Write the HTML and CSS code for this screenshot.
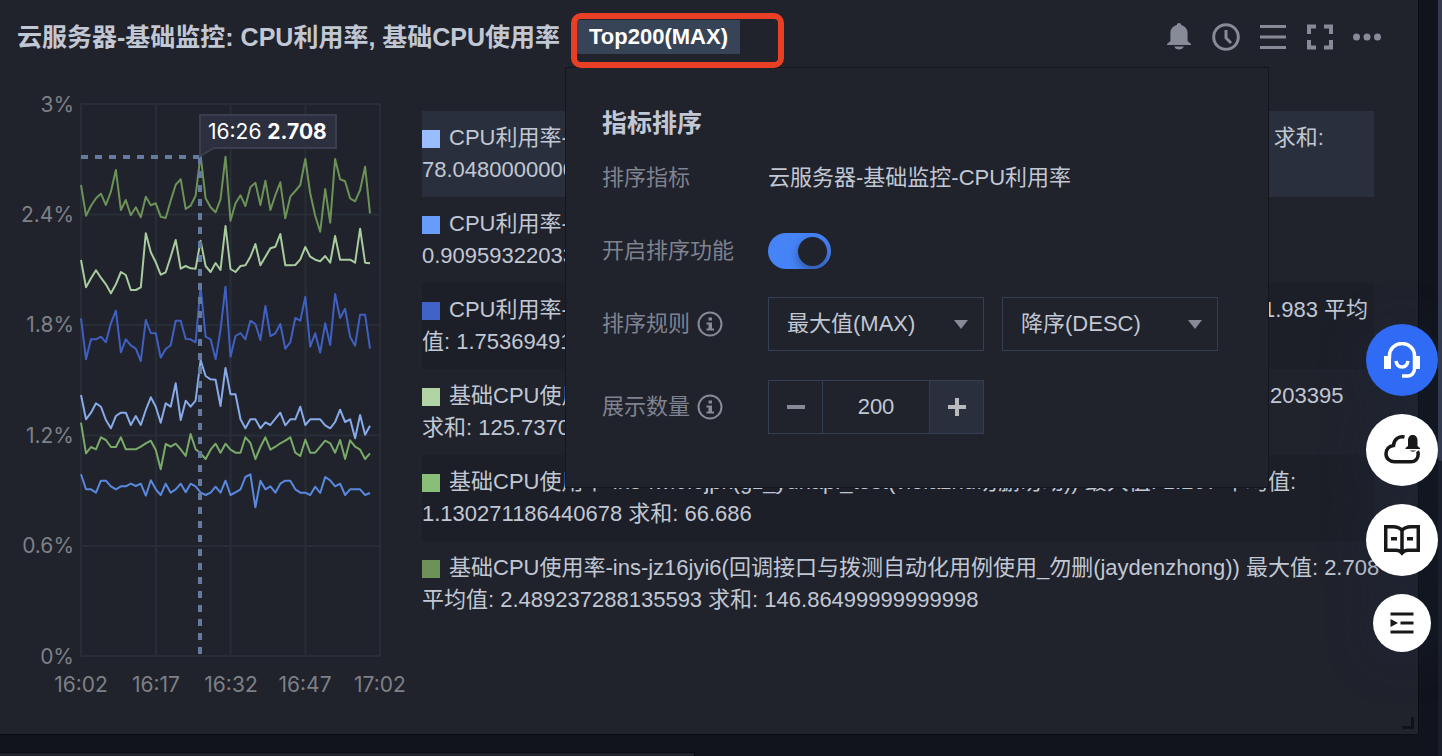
FILE: index.html
```html
<!DOCTYPE html>
<html lang="zh-CN">
<head>
<meta charset="utf-8">
<title>云服务器-基础监控</title>
<link rel="stylesheet" href="styles.css">
</head>
<body>
<main class="board">
  <section class="panel">
    <header class="panel-head">
      <h1 class="panel-title">云服务器-基础监控: CPU利用率, 基础CPU使用率</h1>
      <div class="tag-wrap">
        <button class="tag" type="button">Top200(MAX)</button>
        <span class="highlight"></span>
      </div>
      <nav class="tools">
        <button class="tool" type="button" aria-label="告警"><svg viewBox="0 0 28 28"><path d="M14 0c1.500 0 2.200.8 2.200 2 4 1 6.400 4.200 6.400 8.200V18l3.400 3v1H2v-1l3.400-3v-7.800C5.400 6.200 7.800 3 11.800 2c0-1.200.7-2 2.200-2z" /><path d="M9.200 23.500h9.600c-.8 2-2.400 3-4.800 3s-4-1-4.800-3z"/></svg></button>
        <button class="tool" type="button" aria-label="时间"><svg viewBox="0 0 28 28"><circle cx="14" cy="14" r="12.300" class="line"/><path d="M14 7v8l5 5" class="line"/></svg></button>
        <button class="tool" type="button" aria-label="列表"><svg viewBox="0 0 28 28"><path d="M1 2h26v3H1zM1 12.500h26v3H1zM1 23h26v3H1z"/></svg></button>
        <button class="tool" type="button" aria-label="全屏"><svg viewBox="0 0 28 28"><path d="M3 11V3.500h7M18 3.500h7V11M25 17v7.500h-7M10 24.500H3V17" class="line thick"/></svg></button>
        <button class="tool" type="button" aria-label="更多"><svg viewBox="0 0 28 28"><circle cx="3.500" cy="14" r="3.500"/><circle cx="14" cy="14" r="3.500"/><circle cx="24.500" cy="14" r="3.500"/></svg></button>
      </nav>
    </header>

    <div class="panel-body">
      <svg class="chart" viewBox="0 74 410 640" role="img" aria-label="CPU利用率">
        <path class="grid" d="M81 104H380M81 214.500H380M81 325H380M81 435.500H380M81 546H380M81 656H380M81 104V656M156 104V656M230.500 104V656M305.500 104V656M380 104V656"/>
        <g class="ylabels">
          <text x="74" y="112">3%</text><text x="74" y="222">2.4%</text><text x="74" y="332">1.8%</text>
          <text x="74" y="443">1.2%</text><text x="74" y="553">0.6%</text><text x="74" y="664">0%</text>
        </g>
        <g class="xlabels">
          <text x="81" y="692">16:02</text><text x="156" y="692">16:17</text><text x="231" y="692">16:32</text>
          <text x="305" y="692">16:47</text><text x="380" y="692">17:02</text>
        </g>
        <g id="series"></g>
        <path class="cross" d="M81 157H200"/><path class="cross" d="M200 157V656"/>
        <path class="tip" d="M200 156V115H336V148H214Z"/>
        <text class="tip-text" x="208" y="139">16:26 <tspan class="tip-value">2.708</tspan></text>
      </svg>

      <ul class="legend">
        <li class="item active"><i class="swatch s1"></i>CPU利用率-ins-e1kq7v2o(test_cvmi01)<span class="stat">最大值: 1.606</span><span class="stat">平均值: 1.3228474576271188</span><span class="stat">求和:</span><br>78.04800000000002</li>
        <li class="item"><i class="swatch s2"></i>CPU利用率-ins-f1w6l6jk(gz_yunapi_test(viola勿删))<span class="stat">最大值: 0.987</span><span class="stat">平均值:</span><br>0.9095932203389831<span class="stat">求和: 53.666</span></li>
        <li class="item"><i class="swatch s3"></i>CPU利用率-ins-jz16jyi6(回调接口与拨测自动化用例使用勿删(aydenzhong))<span class="stat">最大值: 1.983</span><span class="stat">平均</span><br>值: 1.7536949152542374<span class="stat">求和: 103.468</span></li>
        <li class="item"><i class="swatch s4"></i>基础CPU使用率-ins-e1kq7v2o(test_cvm00001)<span class="stat">最大值: 2.321</span><span class="stat">平均值: 2.1311355932203395</span><br>求和: 125.73700000000002</li>
        <li class="item"><i class="swatch s5"></i>基础CPU使用率-ins-fwi6l6jpk(gz_yunapi_test(violazhu勿删勿动))<span class="stat">最大值: 1.267</span><span class="stat">平均值:</span><br>1.130271186440678<span class="stat">求和: 66.686</span></li>
        <li class="item"><i class="swatch s6"></i>基础CPU使用率-ins-jz16jyi6(回调接口与拨测自动化用例使用_勿删(jaydenzhong))<span class="stat">最大值: 2.708</span><br>平均值: 2.489237288135593<span class="stat">求和: 146.86499999999998</span></li>
      </ul>
    </div>
    <span class="resize"></span>

    <form class="popover">
      <h2 class="popover-title">指标排序</h2>
      <div class="row"><span class="label">排序指标</span><span class="value">云服务器-基础监控-CPU利用率</span></div>
      <div class="row toggle-row"><label class="label" for="enable">开启排序功能</label><input class="toggle" id="enable" type="checkbox" checked></div>
      <div class="row control-row">
        <label class="label" for="rule">排序规则<svg class="info" viewBox="0 0 26 26"><circle cx="13" cy="13" r="11.500"/><path d="M11.500 6.500h3.500v3h-3.500zM9.500 11.500H15v6h2v2H9.500v-2h2v-4h-2z"/></svg></label>
        <div class="selects">
          <span class="select-wrap"><select class="select" id="rule"><option>最大值(MAX)</option></select><svg class="caret" viewBox="0 0 14 9"><path d="M0 0h14L7 9z"/></svg></span>
          <span class="select-wrap"><select class="select" aria-label="排序方式"><option>降序(DESC)</option></select><svg class="caret" viewBox="0 0 14 9"><path d="M0 0h14L7 9z"/></svg></span>
        </div>
      </div>
      <div class="row control-row">
        <label class="label" for="count">展示数量<svg class="info" viewBox="0 0 26 26"><circle cx="13" cy="13" r="11.500"/><path d="M11.500 6.500h3.500v3h-3.500zM9.500 11.500H15v6h2v2H9.500v-2h2v-4h-2z"/></svg></label>
        <div class="stepper">
          <button class="step" type="button" aria-label="减少"><svg viewBox="0 0 18 18"><path d="M0 7h18v4H0z"/></svg></button>
          <input class="count" id="count" type="text" value="200">
          <button class="step plus" type="button" aria-label="增加"><svg viewBox="0 0 18 18"><path d="M0 7h7V0h4v7h7v4h-7v7H7v-7H0z"/></svg></button>
        </div>
      </div>
    </form>
  </section>
  <section class="panel next-panel"></section>
</main>
<div class="scroll-thumb"></div>

<aside class="dock">
  <button class="fab primary" type="button" aria-label="客服"><svg viewBox="0 0 36 36"><path d="M5.500 16v-2.500a12.500 12 0 0 1 25 0V27a7 7 0 0 1-7 7H18" class="ln"/><path d="M0 14h7v13H0zM29 14h7v13h-7z" class="fl"/><path d="M12 19c1.500 8 10.500 8 12 0" class="ln"/></svg></button>
  <button class="fab" type="button" aria-label="云告警"><svg viewBox="0 0 36 36"><path d="M20.500 5c-5.500-1-10.500 2-11 8.500C5 14 2 17.500 2 21.800c0 4.700 3.700 8 8.500 8H27c4 0 7.200-3.200 7.200-7.500 0-1.200-.2-2.200-.7-3" class="ln"/><path d="M24 8.500C24 5 26 3 28.700 3s4.800 2 4.800 5.500V14l2.500 2v1H21.500v-1l2.500-2zM26 18.500h6c-.8 1.500-5.200 1.500-6 0z" class="fl"/></svg></button>
  <button class="fab" type="button" aria-label="文档"><svg viewBox="0 0 36 36"><path d="M18 8.500C15.500 5 12 4.700 9 4.700H1.700v23.600H12c3 0 4 .4 6 2.700 2-2.300 3-2.700 6-2.700h10.300V4.700H27c-3 0-6.500.3-9 3.800V30" class="ln"/><path d="M7 15h6v3.500H7zM23 15h6v3.500h-6z" class="fl"/></svg></button>
  <button class="fab small" type="button" aria-label="展开"><svg viewBox="0 0 24 24"><path d="M.5 1.500h23v3H.500zM.5 19.500h23v3H.500zM10.500 10.500h13v3h-13zM.5 8l7.500 4L.5 16z" class="fl"/></svg></button>
</aside>
<script src="chart.js"></script>
</body>
</html>
```
FILE: styles.css
```css
* { box-sizing: border-box; }

body {
  margin: 0;
  height: 100vh;
  overflow: hidden;
  background: #11141c;
  color: #c1c8d4;
  font: 22px/32px "Liberation Sans", "Noto Sans CJK SC", sans-serif;
}

button, input, select { font: inherit; color: inherit; margin: 0; padding: 0; border: 0; background: none; border-radius: 0; }

.board {
  height: 100%;
  display: flex;
  flex-direction: column;
  gap: 17px;
  padding-right: 19px;
  border-right: 4px solid #1a1e2a;
}

.scroll-thumb { position: fixed; right: 0; top: 0; width: 4px; height: 61%; background: #343b4f; border-radius: 0 0 0 4px; }

.panel {
  position: relative;
  flex: 1;
  background: #20222c;
  border: solid #0b0d12;
  border-width: 0 1px 1px 0;
}

.next-panel { flex: 0 0 4px; width: 49%; border-width: 1px 1px 0 0; }

.panel-head { display: flex; align-items: center; height: 74px; padding: 0 37px 0 17px; }
.panel-title { margin: 0; font-size: 25px; line-height: 34px; font-weight: bold; white-space: nowrap; }
.tag-wrap { position: relative; margin-left: 17px; }
.tag { display: block; height: 34px; padding: 0 12px; background: #374357; color: #fff; font-size: 22px; font-weight: bold; }
.highlight { position: absolute; left: -6px; top: -7px; width: 213px; height: 55px; border: 6px solid #e83f25; border-radius: 10px; z-index: 3; }

.tools { display: flex; gap: 19px; margin-left: auto; }
.tool { width: 28px; height: 28px; }
.tool svg { display: block; fill: #878b97; }
.tool .line { fill: none; stroke: #878b97; stroke-width: 3; }
.tool .thick { stroke-width: 4; }

.panel-body { display: flex; gap: 12px; padding-right: 44px; }
.chart { flex: none; width: 410px; height: 640px; font-family: Inter, sans-serif; font-size: 21px; }
.grid { stroke: #282e37; stroke-width: 2; fill: none; }
.ylabels, .xlabels { fill: #7e8086; }
.ylabels { text-anchor: end; }
.xlabels { text-anchor: middle; }
.series { fill: none; stroke-width: 2; stroke-linejoin: round; }
.cross { stroke: #647a9f; stroke-width: 4; stroke-dasharray: 7 7; fill: none; }
.tip { fill: #2d303e; stroke: #3a3e4e; stroke-width: 2; fill-opacity: 0.95; }
.tip-text { fill: #fff; }
.tip-value { font-weight: bold; }

.legend { flex: 1; min-width: 0; margin: 37px 0 0; padding: 0; list-style: none; }
.item { padding: 11px 0; white-space: nowrap; }
.item:nth-child(odd) { background: #1d1f28; }
.item.active { background: #292f3c; }
.stat { margin-left: 6px; }
.swatch { display: inline-block; width: 18px; height: 18px; margin-right: 9px; vertical-align: -3px; }
.s1 { background: #99bdff; }
.s2 { background: #669dfa; }
.s3 { background: #4163c8; }
.s4 { background: #b1d4a5; }
.s5 { background: #89be78; }
.s6 { background: #6c9258; }

.resize { position: absolute; right: 4px; bottom: 5px; width: 12px; height: 12px; border: solid #101218; border-width: 0 3px 3px 0; }

.popover {
  position: absolute;
  left: 565px;
  top: 67px;
  padding: 37px 50px 53px 36px;
  background: #20222c;
  border: 1px solid #14161d;
  z-index: 2;
}
.popover-title { margin: 0 0 19px; font-size: 25px; line-height: 36px; }
.row { display: flex; align-items: center; min-height: 36px; }
.toggle-row { margin: 37px 0 28px; }
.control-row + .control-row { margin-top: 29px; }
.label { display: flex; align-items: center; width: 166px; color: #7f8390; }
.info { width: 26px; height: 26px; margin-left: 7px; fill: #878b97; }
.info circle { fill: none; stroke: #878b97; stroke-width: 2; }

.toggle { appearance: none; display: flex; justify-content: flex-end; align-items: center; width: 63px; height: 36px; padding: 0 4px; border-radius: 18px; background: #4583f7; overflow: hidden; }
.toggle::after { content: ""; width: 29px; height: 29px; border-radius: 50%; background: #20222c; box-shadow: 0 4px 8px rgba(30, 40, 70, 0.5); }

.selects { display: flex; gap: 18px; }
.select-wrap { display: flex; position: relative; }
.select { appearance: none; width: 216px; height: 54px; padding: 0 18px; border: 1px solid #343f53; }
.caret { position: absolute; right: 16px; top: 23px; width: 14px; height: 9px; fill: #878b97; pointer-events: none; }

.stepper { display: flex; width: 216px; height: 54px; border: 1px solid #343f53; }
.step { display: grid; place-items: center; flex: none; width: 53px; fill: #878b97; }
.step svg { width: 18px; height: 18px; }
.plus { background: #292f3c; fill: #b8babd; }
.count { flex: 1; min-width: 0; text-align: center; border: solid #343f53; border-width: 0 1px; }

.dock { position: fixed; right: 4px; top: 324px; display: flex; flex-direction: column; align-items: center; gap: 18px; z-index: 4; filter: drop-shadow(0 6px 24px rgba(25, 45, 75, 0.3)); }
.fab { display: grid; place-items: center; width: 72px; height: 72px; border-radius: 50%; background: #fff; color: #17181a; }
.fab svg { width: 36px; height: 36px; }
.fab .ln { fill: none; stroke: currentColor; stroke-width: 3.5; }
.fab .fl { fill: currentColor; }
.fab.primary { background: #2f6bf5; color: #fff; }
.fab.small { width: 58px; height: 58px; }
.fab.small svg { width: 24px; height: 24px; }
```
FILE: chart.js
```js
// One sample per minute from 16:02; values are thirds of a pixel below the given base line.
const series = [
  { color: '#6c9258', base: 90, data: [285,377,347,325,311,345,305,240,360,330,376,352,382,320,346,340,380,384,332,284,268,357,347,317,195,325,352,367,328,200,392,340,316,348,292,278,345,272,360,315,277,385,320,303,285,207,310,377,425,297,398,207,268,274,325,334,300,230,370] },
  { color: '#a8cc9e', base: 90, data: [510,592,565,541,563,583,610,583,546,555,600,600,592,430,487,517,554,547,500,450,536,528,535,536,452,528,546,519,540,408,537,546,528,526,500,462,526,500,475,470,432,526,526,525,508,471,500,509,514,498,518,438,509,509,509,518,416,518,520] },
  { color: '#3f60c0', base: 90, data: [685,808,748,748,740,757,700,662,787,748,766,776,813,690,729,730,803,777,766,692,692,747,748,757,590,740,748,808,720,590,800,738,729,748,692,702,750,648,738,730,702,776,757,684,692,620,770,730,788,700,765,612,684,656,740,767,674,674,776] },
  { color: '#87aae8', base: 340, data: [165,238,218,190,200,240,265,228,218,218,255,228,255,210,172,200,248,190,200,130,240,182,200,182,60,108,118,119,198,84,163,163,238,265,238,238,265,247,255,236,218,256,238,238,200,255,238,238,238,256,265,246,209,246,238,295,225,284,257] },
  { color: '#79aa69', base: 340, data: [248,340,321,328,292,300,321,321,292,328,328,328,320,310,302,330,388,312,320,311,328,348,282,328,340,357,329,311,338,311,329,338,338,292,309,357,321,292,329,320,310,302,292,338,348,299,338,338,320,302,310,338,300,357,301,320,329,357,340] },
  { color: '#5889de', base: 340, data: [403,448,448,458,422,422,439,448,439,439,431,438,431,467,421,448,465,431,458,448,431,457,431,439,458,465,458,440,458,422,465,457,448,411,403,502,422,448,439,458,431,422,422,448,458,458,465,440,459,411,421,439,431,465,448,448,448,465,459] }
];
const group = document.getElementById('series');
for (const s of series) {
  const line = document.createElementNS('http://www.w3.org/2000/svg', 'polyline');
  line.setAttribute('class', 'series');
  line.setAttribute('stroke', s.color);
  line.setAttribute('points', s.data.map((v, i) => `${(81 + i * 299 / 60).toFixed(1)},${(s.base + v / 3).toFixed(1)}`).join(' '));
  group.appendChild(line);
}
```
